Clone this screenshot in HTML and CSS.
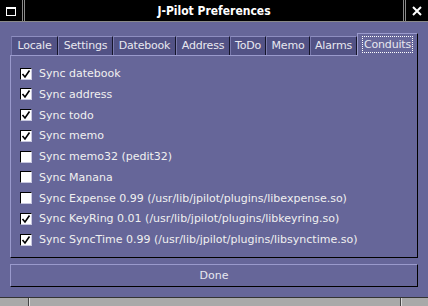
FILE: index.html
```html
<!DOCTYPE html>
<html>
<head>
<meta charset="utf-8">
<link rel="stylesheet" href="styles.css">
</head>
<body>
<div class="window">
  <div class="titlebar">
    <div class="tb-btn tb-menu">
      <svg width="10" height="9" viewBox="0 0 10 9"><rect x="0.5" y="0.5" width="9" height="8" fill="none" stroke="#fff"/><rect x="0" y="0" width="10" height="2" fill="#fff"/></svg>
    </div>
    <div class="tb-title">J-Pilot Preferences</div>
    <div class="tb-btn tb-close">
      <svg width="10" height="10" viewBox="0 0 10 10"><path d="M1 1 L9 9 M9 1 L1 9" stroke="#fff" stroke-width="2"/></svg>
    </div>
  </div>
  <div class="main">
    <div class="tabs">
      <div class="tab t-locale">Locale</div>
      <div class="tab t-settings">Settings</div>
      <div class="tab t-datebook">Datebook</div>
      <div class="tab t-address">Address</div>
      <div class="tab t-todo">ToDo</div>
      <div class="tab t-memo">Memo</div>
      <div class="tab t-alarms">Alarms</div>
      <div class="tab t-conduits active"><span class="focus">Conduits</span></div>
    </div>
    <div class="panel">
      <div class="row"><span class="cb on"><svg width="10" height="10" viewBox="0 0 10 10"><path d="M1.5 5 L4 8 L8.5 1.5" fill="none" stroke="#000" stroke-width="1.6"/></svg></span><span class="lbl">Sync datebook</span></div>
      <div class="row"><span class="cb on"><svg width="10" height="10" viewBox="0 0 10 10"><path d="M1.5 5 L4 8 L8.5 1.5" fill="none" stroke="#000" stroke-width="1.6"/></svg></span><span class="lbl">Sync address</span></div>
      <div class="row"><span class="cb on"><svg width="10" height="10" viewBox="0 0 10 10"><path d="M1.5 5 L4 8 L8.5 1.5" fill="none" stroke="#000" stroke-width="1.6"/></svg></span><span class="lbl">Sync todo</span></div>
      <div class="row"><span class="cb on"><svg width="10" height="10" viewBox="0 0 10 10"><path d="M1.5 5 L4 8 L8.5 1.5" fill="none" stroke="#000" stroke-width="1.6"/></svg></span><span class="lbl">Sync memo</span></div>
      <div class="row"><span class="cb"></span><span class="lbl">Sync memo32 (pedit32)</span></div>
      <div class="row"><span class="cb"></span><span class="lbl">Sync Manana</span></div>
      <div class="row"><span class="cb"></span><span class="lbl">Sync Expense 0.99 (/usr/lib/jpilot/plugins/libexpense.so)</span></div>
      <div class="row"><span class="cb on"><svg width="10" height="10" viewBox="0 0 10 10"><path d="M1.5 5 L4 8 L8.5 1.5" fill="none" stroke="#000" stroke-width="1.6"/></svg></span><span class="lbl">Sync KeyRing 0.01 (/usr/lib/jpilot/plugins/libkeyring.so)</span></div>
      <div class="row"><span class="cb on"><svg width="10" height="10" viewBox="0 0 10 10"><path d="M1.5 5 L4 8 L8.5 1.5" fill="none" stroke="#000" stroke-width="1.6"/></svg></span><span class="lbl">Sync SyncTime 0.99 (/usr/lib/jpilot/plugins/libsynctime.so)</span></div>
    </div>
    <div class="done">Done</div>
  </div>
  <div class="statusbar">
    <div class="sb-cell sb-left"></div>
    <div class="sb-cell sb-mid"></div>
    <div class="sb-cell sb-right"></div>
  </div>
</div>
</body>
</html>
```

FILE: styles.css
```css
* { box-sizing: border-box; }
html, body { margin: 0; padding: 0; }
body {
  width: 428px;
  height: 306px;
  overflow: hidden;
  background: #666699;
  font-family: "DejaVu Sans", "Liberation Sans", sans-serif;
  font-size: 11px;
  color: #f0f0f0;
}
.window { display: flex; flex-direction: column; height: 306px; }

.titlebar {
  display: flex;
  height: 23px;
  background: #000;
  border-bottom: 1px solid #8a8a8a;
  gap: 1px;
}
.tb-btn {
  width: 23px;
  display: flex;
  align-items: center;
  justify-content: center;
  border-right: 1px solid #8a8a8a;
}
.tb-menu svg { margin-top: 1px; }
.tb-close { width: 23px; border-right: none; border-left: 1px solid #8a8a8a; }
.tb-title {
  flex: 1;
  border-left: 1px solid #8a8a8a;
  border-right: 1px solid #8a8a8a;
  display: flex;
  align-items: center;
  justify-content: center;
  color: #fff;
  font-family: "DejaVu Sans Condensed", "DejaVu Sans", sans-serif;
  font-stretch: condensed;
  font-weight: bold;
  font-size: 12px;
}

.main {
  flex: 1;
  padding: 11px 10px 10px 10px;
  display: flex;
  flex-direction: column;
}
.tabs {
  display: flex;
  align-items: flex-end;
  height: 22px;
  padding-left: 1px;
}
.tab {
  flex: none;
  height: 19px;
  padding: 0;
  background: #525285;
  border-top: 1px solid #8e8ec0;
  border-left: 1px solid #7a7aae;
  border-right: 1px solid #15152a;
  line-height: 17px;
  text-align: center;
  color: #e8e8f0;
  letter-spacing: -0.2px;
  white-space: nowrap;
}
.t-locale { width: 47px; }
.t-settings { width: 55px; }
.t-datebook { width: 63px; }
.t-address { width: 54px; }
.t-todo { width: 36px; }
.t-memo { width: 44px; }
.t-alarms { width: 47px; }
.t-conduits { width: 61px; }
.tab.active {
  height: 23px;
  margin-bottom: -1px;
  position: relative;
  background: #666699;
  border-top: 1px solid #9a9acc;
  border-left: 1px solid #9a9acc;
  border-right: 1px solid #000;
  padding-top: 2px;
  line-height: 15px;
}
.focus {
  display: inline-block;
  border: 1px dotted #fff;
  padding: 0 1px;
}

.panel {
  height: 203px;
  border-top: 1px solid #9a9acc;
  border-left: 1px solid #9a9acc;
  border-right: 1px solid #000;
  border-bottom: 1px solid #000;
  padding: 7px 0 0 9px;
  display: flex;
  flex-direction: column;
}
.row {
  height: 20.75px;
  display: flex;
  align-items: center;
  gap: 7px;
}
.cb {
  width: 12px;
  height: 12px;
  background: #fff;
  border-top: 1px solid #000;
  border-left: 1px solid #000;
  border-right: 1px solid #c8c8e0;
  border-bottom: 1px solid #c8c8e0;
  flex: none;
  display: flex;
}
.cb svg { display: block; }
.lbl { white-space: nowrap; }

.done {
  margin-top: 6px;
  height: 23px;
  border-top: 1px solid #9a9acc;
  border-left: 1px solid #9a9acc;
  border-right: 1px solid #000;
  border-bottom: 1px solid #000;
  display: flex;
  align-items: center;
  justify-content: center;
  color: #e8e8f0;
}

.statusbar {
  height: 9px;
  border-top: 1px solid #333;
  background: #a9a9a9;
  display: flex;
}
.sb-cell { height: 100%; }
.sb-left { width: 29px; border-right: 1px solid #444; }
.sb-mid { flex: 1; border-left: 1px solid #ddd; border-right: 1px solid #444; }
.sb-right { width: 27px; border-left: 1px solid #ddd; }
```
